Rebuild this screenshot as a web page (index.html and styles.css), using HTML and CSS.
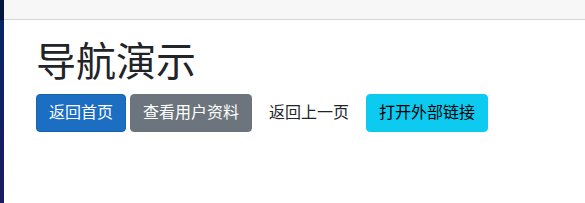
FILE: index.html
```html
<!DOCTYPE html>
<html lang="zh">
<head>
<meta charset="utf-8">
<title>导航演示</title>
<link rel="stylesheet" href="styles.css">
</head>
<body>
<div class="page">
  <div class="sidebar">
    <div class="sidebar-top"></div>
  </div>
  <main class="main">
    <div class="top-row"></div>
    <article class="content">
      <h1 class="title">导航演示</h1>
      <div class="actions">
        <button class="btn btn-primary">返回首页</button>
        <button class="btn btn-secondary">查看用户资料</button>
        <button class="btn btn-plain">返回上一页</button>
        <button class="btn btn-info">打开外部链接</button>
      </div>
    </article>
  </main>
</div>
</body>
</html>
```

FILE: styles.css
```css
html, body {
  margin: 0;
  padding: 0;
  height: 100%;
}
body {
  font-family: "Liberation Sans", "Noto Sans CJK SC", sans-serif;
  color: #212529;
  background: #fff;
}
.page {
  display: flex;
  min-height: 100vh;
}
.sidebar {
  width: 4px;
  flex: none;
  background: linear-gradient(180deg, rgb(5, 39, 103) 0%, #1c1a62 100%);
}
.sidebar-top {
  height: 20px;
  background: rgba(0, 0, 0, 0.4);
}
.main {
  flex: 1;
  display: flex;
  flex-direction: column;
}
.top-row {
  height: 19px;
  background: #f7f7f7;
  border-bottom: 1px solid #d6d5d5;
}
.content {
  padding: 18px 32px 0 32px;
}
.title {
  margin: 0 0 8px 0;
  font-size: 40px;
  font-weight: 400;
  line-height: 48px;
  color: #212529;
}
.actions {
  display: flex;
  gap: 4px;
  align-items: center;
}
.btn {
  font-family: inherit;
  font-size: 16px;
  line-height: 24px;
  padding: 6px 12px;
  border: 1px solid transparent;
  border-radius: 4px;
  background: transparent;
  color: #212529;
  cursor: pointer;
}
.btn-primary {
  background: #1b6ec2;
  border-color: #1861ac;
  color: #fff;
}
.btn-secondary {
  background: #6c757d;
  border-color: #6c757d;
  color: #fff;
}
.btn-info {
  background: #0dcaf0;
  border-color: #0dcaf0;
  color: #000;
}
```
